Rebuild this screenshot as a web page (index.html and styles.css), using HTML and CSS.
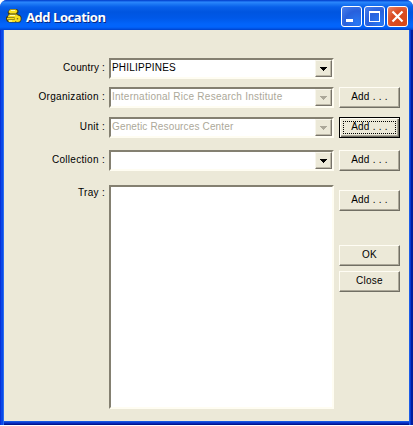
FILE: index.html
```
<!DOCTYPE html>
<html lang="en">
<head>
<meta charset="utf-8">
<title>Add Location</title>
<link rel="stylesheet" href="styles.css">
</head>
<body>
<div class="window">
  <header class="titlebar">
    <svg class="app-icon" width="16" height="16" viewBox="0 0 16 16">
      <path d="M4 1h7l1.500 1.500v2L11 6l3 1 1.500 2v3L14 14.500H3l-2-1-1-2V9l2.500-2-1-3z" fill="#3a3a20"/>
      <path d="M4 1.500h6l1.500 1.500L10 5.500H4L2.500 4zM3 6.500h8L12 8l-4 1.500H1.500zM1 10h7v1.500H1zM2 12h7v2H3z" fill="#f8e020"/>
      <circle cx="11.500" cy="10.800" r="3.200" fill="#f8e020"/>
      <path d="M5 2h4v1H5zM4 7h5v1H4zM3 12.500h3v1H3z" fill="#fffcae"/>
      <circle cx="11.500" cy="10.800" r=".8" fill="#7b6a20"/>
    </svg>
    <h1 class="title">Add Location</h1>
    <div class="controls">
      <button class="control" aria-label="Minimize"><svg width="21" height="21" viewBox="0 0 21 21"><path d="M5 13h7v3H5z" fill="#fff"/></svg></button>
      <button class="control" aria-label="Maximize"><svg width="21" height="21" viewBox="0 0 21 21"><path fill-rule="evenodd" d="M5 5h11v11H5zM6 7v8h9V7z" fill="#fff"/></svg></button>
      <button class="control control-close" aria-label="Close"><svg width="21" height="21" viewBox="0 0 21 21"><path d="M5.500 5.500l10 10M15.500 5.500l-10 10" stroke="#fff" stroke-width="2.2"/></svg></button>
    </div>
  </header>
  <main class="form">
    <span class="label label-country">Country :</span>
    <div class="combo"><span class="value value-country">PHILIPPINES</span><span class="drop"><svg width="7" height="4" viewBox="0 0 7 4" shape-rendering="crispEdges"><path d="M0 0h7v1H6v1H5v1H4v1H3V3H2V2H1V1H0z"/></svg></span></div>
    <span></span>

    <span class="label">Organization :</span>
    <div class="combo disabled"><span class="value value-organization">International Rice Research Institute</span><span class="drop"><svg width="7" height="4" viewBox="0 0 7 4" shape-rendering="crispEdges"><path d="M0 0h7v1H6v1H5v1H4v1H3V3H2V2H1V1H0z"/></svg></span></div>
    <button class="button">Add . . .</button>

    <span class="label">Unit :</span>
    <div class="combo disabled"><span class="value value-unit">Genetic Resources Center</span><span class="drop"><svg width="7" height="4" viewBox="0 0 7 4" shape-rendering="crispEdges"><path d="M0 0h7v1H6v1H5v1H4v1H3V3H2V2H1V1H0z"/></svg></span></div>
    <button class="button focused"><span class="focus-ring">Add . . .</span></button>

    <span class="label">Collection :</span>
    <div class="combo"><span class="value"></span><span class="drop"><svg width="7" height="4" viewBox="0 0 7 4" shape-rendering="crispEdges"><path d="M0 0h7v1H6v1H5v1H4v1H3V3H2V2H1V1H0z"/></svg></span></div>
    <button class="button">Add . . .</button>

    <span class="label label-tray">Tray :</span>
    <div class="list"></div>
    <div class="actions">
      <button class="button">Add . . .</button>
      <button class="button button-ok">OK</button>
      <button class="button button-close">Close</button>
    </div>
  </main>
</div>
</body>
</html>
```
FILE: styles.css
```
* { box-sizing: border-box; }
body {
  margin: 0;
  background: #fff;
  font: 10px/12px "Liberation Sans", Arial, sans-serif;
  color: #000;
}
.window {
  width: 413px;
  height: 425px;
  padding: 0 4px 4px;
  border-radius: 7px 7px 0 0;
  background: linear-gradient(90deg, #0831d9 0 1px, #0a48e8 1px 3px, #2a6cf0 3px 4px, transparent 4px 409px, #1c5ce8 409px 410px, #0838d0 410px 411px, #001ea0 411px), linear-gradient(0deg, #00138c 0 1px, #0627b4 1px 2px, #0c3cd0 2px 3px, #1a58e0 3px 4px, #0831d9 4px);
}
.titlebar {
  display: flex;
  height: 30px;
  margin: 0 -4px;
  padding: 0 5px 0 6px;
  border-radius: 7px 7px 0 0;
  background: linear-gradient(#0842c8 0, #0a55e0 1px, #2c88fc 2px, #1c78f4 4px, #0860ea 7px, #0055e0 12px, #0058e8 18px, #0264fa 24px, #0264fc 27px, #0050e0 29px, #0040c8 30px);
}
.app-icon { margin-top: 8px; }
.title {
  margin: 9px 0 0 4px;
  font: bold 13px/16px "Open Sans", "Noto Sans", sans-serif;
  letter-spacing: -0.45px;
  color: #fff;
  text-shadow: 1px 1px 0 #082884;
  white-space: nowrap;
}
.controls {
  display: flex;
  gap: 2px;
  margin: 6px 0 0 auto;
}
.control {
  width: 21px;
  height: 21px;
  padding: 0;
  border: 1px solid #fff;
  border-radius: 3px;
  background: radial-gradient(circle at 80% 85%, #2878f4, #2860dc 55%, #4c80ec 100%);
}
.control svg { display: block; margin: -1px; }
.control-close { background: radial-gradient(circle at 75% 80%, #d84818, #da4c24 55%, #ec8868 100%); }
.form {
  display: grid;
  grid-template-columns: 101px 225px 62px;
  grid-template-rows: 29px 30px 33px 35px 224px;
  column-gap: 4px;
  align-items: start;
  height: 391px;
  padding-top: 28px;
  background: #ece9d8;
}
.label {
  justify-self: end;
  padding-top: 4px;
  white-space: nowrap;
  letter-spacing: 0.3px;
}
.label-country { letter-spacing: 0.15px; }
.label-tray { padding-top: 2px; }
.combo, .list {
  border: 2px solid;
  border-color: #848071 #fffdf2 #fffdf2 #848071;
  background: #fff;
}
.combo {
  display: flex;
  height: 21px;
}
.list { height: 224px; }
.value {
  flex: 1;
  padding: 2px 0 0 1px;
  white-space: nowrap;
}
.value-country { letter-spacing: 0.2px; }
.value-organization { letter-spacing: 0.25px; }
.value-unit { letter-spacing: 0.15px; }
.disabled .value { color: #aca899; }
.drop {
  display: grid;
  place-items: center;
  width: 17px;
  height: 17px;
  border: 1px solid;
  border-color: #f8f6ec #77736a #77736a #f8f6ec;
  box-shadow: inset -1px -1px #bdb9a8;
  background: #ece9d8;
}
.disabled .drop { fill: #aca899; }
.button {
  display: grid;
  place-items: center;
  width: 61px;
  height: 21px;
  margin-left: 1px;
  padding: 0 0 2px;
  border: 1px solid;
  border-color: #fffdf4 #716f64 #716f64 #fffdf4;
  box-shadow: inset -1px -1px #aca899;
  background: #ece9d8;
  font: inherit;
  letter-spacing: 0.25px;
  color: #000;
}
.focused {
  padding: 0;
  border-color: #000;
  box-shadow: inset 1px 1px #fffdf4, inset -1px -1px #716f64, inset -2px -2px #aca899;
}
.focus-ring {
  width: 53px;
  height: 13px;
  border: 1px dotted #000;
  line-height: 10px;
}
.actions { padding-top: 5px; }
.button-ok { margin-top: 34px; }
.button-close { margin-top: 5px; }
```
